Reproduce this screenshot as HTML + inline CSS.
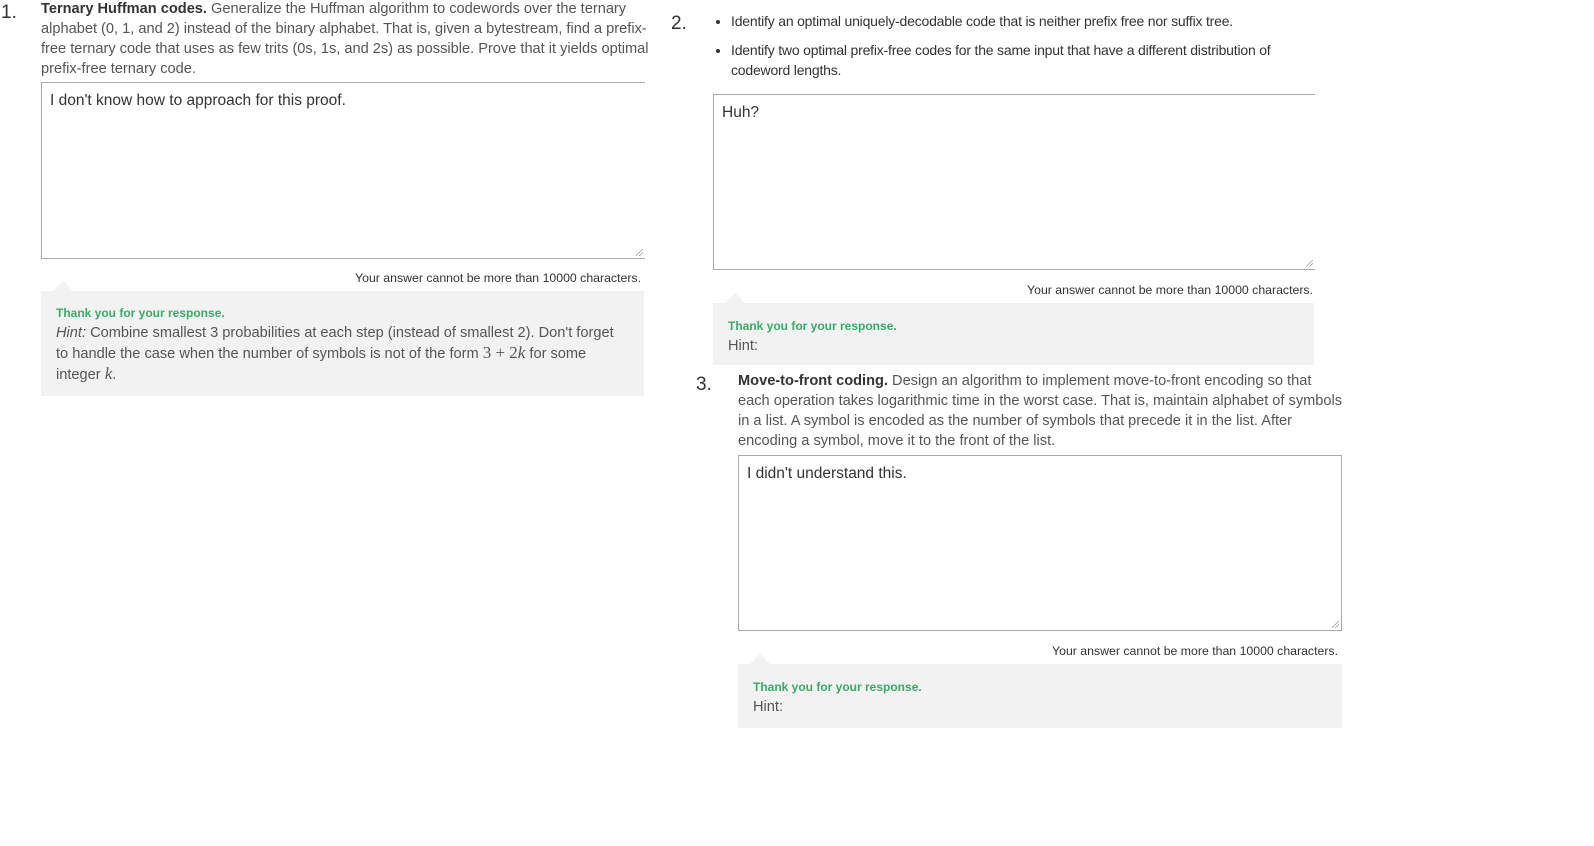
<!DOCTYPE html>
<html><head><meta charset="utf-8"><style>
body{margin:0;width:1594px;height:846px;background:#fff;font-family:"Liberation Sans",sans-serif;color:#444;position:relative;overflow:hidden}
.a{position:absolute}
.num{font-size:19px;color:#333}
.p{font-size:14.6px;line-height:20px;color:#555;white-space:nowrap}
.p b{color:#333}
.ta{position:absolute;border:1px solid #aaa;box-sizing:border-box;background:#fff;font-size:15.5px;color:#333;padding:9px 8px}
.ta:after{content:"";position:absolute;right:2px;bottom:2px;width:7px;height:7px;background:linear-gradient(135deg,transparent 45%,#999 45%,#999 52%,transparent 52%,transparent 70%,#999 70%,#999 77%,transparent 77%)}
.lim{font-size:12.3px;color:#333;text-align:right}
.fb{position:absolute;background:#f2f2f2;padding:0 15px;box-sizing:border-box;font-size:14.6px;line-height:20px;color:#555;white-space:nowrap}
.fb:before{content:"";position:absolute;left:12px;top:-10px;border:10px solid transparent;border-top:0;border-bottom-color:#f2f2f2}
.fb .t{color:#3aaa6a;font-weight:bold;font-size:12px}
ul{margin:0;padding:0 0 0 18px}
li{font-size:14px;line-height:20px;color:#333;margin-bottom:9px;letter-spacing:-0.2px}
</style></head><body>
<div class="a num" style="left:1px;top:2px">1.</div>
<div class="a p" style="left:41px;top:-1px;width:605px">
<b>Ternary Huffman codes.</b> Generalize the Huffman algorithm to codewords over the ternary<br>alphabet (0, 1, and 2) instead of the binary alphabet. That is, given a bytestream, find a prefix-<br>free ternary code that uses as few trits (0s, 1s, and 2s) as possible. Prove that it yields optimal<br>prefix-free ternary code.</div>
<div class="ta" style="left:41px;top:82px;width:604px;height:177px;border-right:none">I don't know how to approach for this proof.</div>
<div class="a lim" style="left:41px;top:271px;width:600px">Your answer cannot be more than 10000 characters.</div>
<div class="fb" style="left:41px;top:291px;width:603px;height:105px;padding-top:12px">
<div class="t">Thank you for your response.</div>
<div><i>Hint:</i> Combine smallest 3 probabilities at each step (instead of smallest 2). Don't forget<br>to handle the case when the number of symbols is not of the form <span style="font-family:'Liberation Serif',serif;font-size:17px">3 + 2<i>k</i></span> for some<br>integer <i style="font-family:'Liberation Serif',serif;font-size:17px">k</i>.</div></div>

<div class="a num" style="left:671px;top:13px">2.</div>
<div class="a" style="left:713px;top:11px;width:600px"><ul>
<li>Identify an optimal uniquely-decodable code that is neither prefix free nor suffix tree.</li>
<li>Identify two optimal prefix-free codes for the same input that have a different distribution of codeword lengths.</li></ul></div>
<div class="ta" style="left:713px;top:94px;width:602px;height:176px;border-right:none">Huh?</div>
<div class="a lim" style="left:713px;top:283px;width:600px">Your answer cannot be more than 10000 characters.</div>
<div class="fb" style="left:713px;top:303px;width:601px;height:62px;padding-top:13px">
<div class="t">Thank you for your response.</div><div>Hint:</div></div>

<div class="a num" style="left:696px;top:374px">3.</div>
<div class="a p" style="left:738px;top:371px;width:610px">
<b>Move-to-front coding.</b> Design an algorithm to implement move-to-front encoding so that<br>each operation takes logarithmic time in the worst case. That is, maintain alphabet of symbols<br>in a list. A symbol is encoded as the number of symbols that precede it in the list. After<br>encoding a symbol, move it to the front of the list.</div>
<div class="ta" style="left:738px;top:455px;width:604px;height:176px">I didn't understand this.</div>
<div class="a lim" style="left:738px;top:644px;width:600px">Your answer cannot be more than 10000 characters.</div>
<div class="fb" style="left:738px;top:664px;width:604px;height:64px;padding-top:13px">
<div class="t">Thank you for your response.</div><div>Hint:</div></div>
</body></html>
